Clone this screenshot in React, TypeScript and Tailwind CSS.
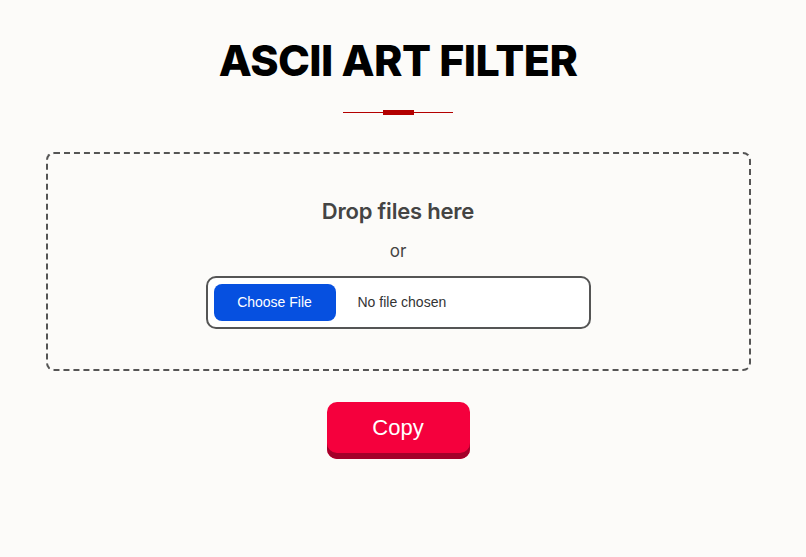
import React from 'react'

export default function App() {
  return (
    <div className="min-h-[557px] w-[796px] bg-[#fcfbf9] flex flex-col items-center pt-[34px] font-['Inter',sans-serif] shadow-[10px_0_0_#fcfbf9]">
      <h1 className="text-[43px] leading-[52px] font-extrabold text-black tracking-[-0.6px] font-['Inter',sans-serif]">
        ASCII ART FILTER
      </h1>
      <div className="mt-[24px] flex items-center w-[110px]">
        <div className="flex-1 h-px bg-[#b30000]" />
        <div className="w-[31px] h-[5px] bg-[#b30000]" />
        <div className="flex-1 h-px bg-[#b30000]" />
      </div>
      <div className="mt-[37px] w-[705px] h-[219px] border-2 border-dashed border-[#555] rounded-lg flex flex-col items-center pt-[42px]">
        <div className="text-[22px] leading-[30px] font-semibold text-[#444] tracking-[-0.2px]">
          Drop files here
        </div>
        <div className="mt-[13px] text-[17px] leading-[24px] text-[#444]">or</div>
        <div className="mt-[13px] w-[385px] h-[53px] border-2 border-[#555] rounded-[10px] bg-white flex items-center px-[6px]">
          <button className="w-[122px] h-[37px] rounded-lg bg-[#0650e0] text-white text-[14px] font-['Liberation_Sans',sans-serif]">
            Choose File
          </button>
          <span className="ml-[22px] text-[14px] text-[#333] font-['Liberation_Sans',sans-serif]">
            No file chosen
          </span>
        </div>
      </div>
      <button className="mt-[31px] w-[143px] h-[57px] rounded-[10px] bg-[#f5003d] text-white text-[22px] font-['Liberation_Sans',sans-serif] shadow-[inset_0_-6px_0_#a3002a] pb-[6px]">
        Copy
      </button>
    </div>
  )
}
